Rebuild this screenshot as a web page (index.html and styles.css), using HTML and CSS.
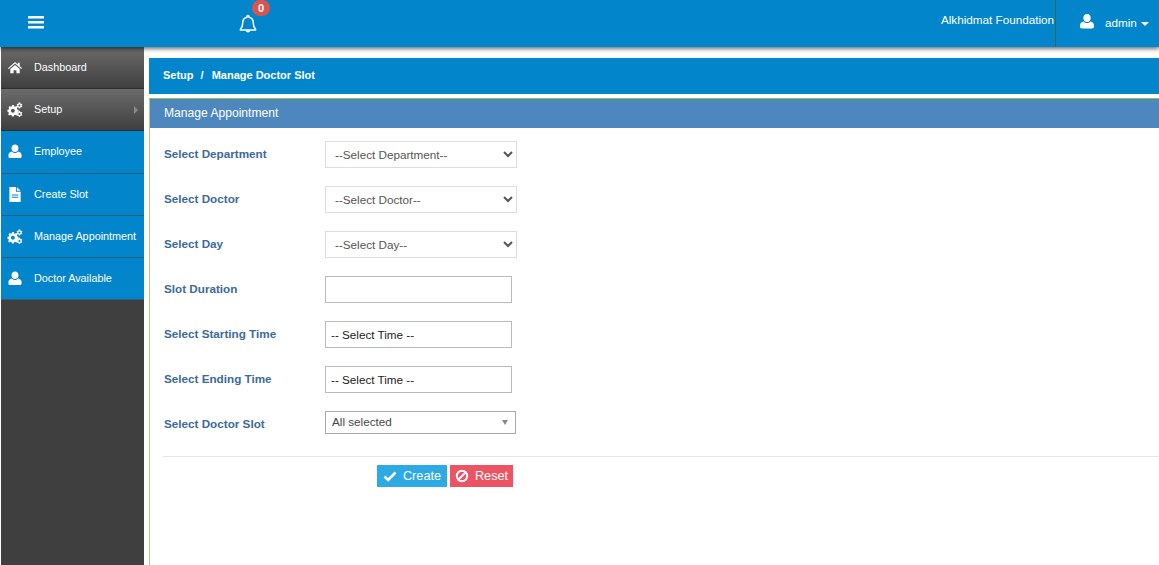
FILE: index.html
```html
<!DOCTYPE html>
<html lang="en">
<head>
<meta charset="utf-8">
<title>Manage Doctor Slot</title>
<link rel="stylesheet" href="styles.css">
</head>
<body>
<svg class="defs" width="0" height="0" aria-hidden="true">
  <symbol id="i-user" viewBox="0 0 16 16"><path d="M8 0.500c2.200 0 3.700 1.700 3.700 3.900S10.200 8.600 8 8.600 4.300 6.600 4.300 4.400 5.800 0.500 8 0.500zM4.600 8c.9 1 2 1.600 3.400 1.600S10.500 9 11.400 8c2 .3 3.600 1.700 3.600 4v1.300c0 1.100-.8 1.700-1.800 1.700H2.800C1.800 15 1 14.400 1 13.300V12c0-2.300 1.600-3.700 3.600-4z"/></symbol>
  <symbol id="i-cogs" viewBox="0 0 18 16"><path fill-rule="evenodd" d="M5.600 3h2l.4 1.500 1.100.5 1.400-.8 1.400 1.400-.8 1.400.5 1.100 1.500.4v2l-1.500.4-.5 1.100.8 1.400-1.400 1.400-1.400-.8-1.100.5-.4 1.500h-2l-.4-1.500-1.100-.5-1.400.8-1.400-1.400.8-1.400-.5-1.100L.5 10.400v-2l1.500-.4.500-1.100-.8-1.400 1.400-1.400 1.400.8 1.100-.5zM6.600 7.200a2.200 2.200 0 1 0 0 4.400 2.200 2.200 0 0 0 0-4.400z"/><path fill-rule="evenodd" d="M14 0l.9.200.1 1 .7.500 1-.3.500.8-.7.800v.9l.7.800-.5.800-1-.3-.7.500-.1 1-.9.200-.9-.2-.1-1-.7-.5-1 .3-.5-.8.700-.8v-.9l-.7-.8.500-.8 1 .3.700-.5.100-1zM14 2.300a1.200 1.200 0 1 0 0 2.400 1.200 1.200 0 0 0 0-2.400z"/><path fill-rule="evenodd" d="M14 9.500l.9.200.1 1 .7.500 1-.3.500.8-.7.800v.9l.7.800-.5.800-1-.3-.7.500-.1 1-.9.200-.9-.2-.1-1-.7-.5-1 .3-.5-.8.700-.8v-.9l-.7-.8.500-.8 1 .3.700-.5.100-1zM14 11.800a1.200 1.200 0 1 0 0 2.400 1.200 1.200 0 0 0 0-2.400z"/></symbol>
</svg>

<header class="topbar">
  <div class="toggle">
    <svg class="burger" viewBox="0 0 16 13" aria-hidden="true"><path d="M0 0h16v2.600H0zM0 5h16v2.600H0zM0 10h16v2.600H0z"/></svg>
  </div>
  <div class="bell">
    <svg class="bell-icon" viewBox="0 0 18 19" aria-hidden="true"><path d="M9 1.600c-.6 0-1 .4-1 1v.6C5.400 3.700 3.800 5.800 3.800 8.300c0 4-.9 5.400-2.400 6.900v.8h15.200v-.8c-1.500-1.500-2.400-2.900-2.400-6.900 0-2.500-1.600-4.600-4.200-5.100v-.6c0-.6-.4-1-1-1z" fill="none" stroke="#fff" stroke-width="1.500" stroke-linejoin="round"/><path d="M6.800 16.600h4.400a2.200 2 0 0 1-4.400 0z" fill="#fff"/></svg>
    <span class="badge">0</span>
  </div>
  <div class="org">Alkhidmat Foundation</div>
  <div class="account">
    <svg class="account-icon"><use href="#i-user"/></svg>
    <span>admin</span>
    <i class="caret"></i>
  </div>
</header>

<div class="shell">
  <nav class="sidebar">
    <a class="nav dark">
      <svg class="ico" viewBox="0 0 16 16" aria-hidden="true"><path d="M8 2l3 2.700V3h2v3.500l2.500 2.300-.8.900L8 3.800 1.300 9.700l-.8-.9zM8 5.200l5 4.400V14H9.500v-3h-3v3H3V9.600z"/></svg>
      <span>Dashboard</span>
    </a>
    <a class="nav dark">
      <svg class="ico"><use href="#i-cogs"/></svg>
      <span>Setup</span>
      <i class="arrow"></i>
    </a>
    <a class="nav">
      <svg class="ico"><use href="#i-user"/></svg>
      <span>Employee</span>
    </a>
    <a class="nav">
      <svg class="ico" viewBox="0 0 16 16" aria-hidden="true"><path fill-rule="evenodd" d="M2 0h7v5h5v11H2zM10 0l4 4h-4zM4.500 8v1h7V8zM4.500 10.500v1h7v-1z"/></svg>
      <span>Create Slot</span>
    </a>
    <a class="nav">
      <svg class="ico"><use href="#i-cogs"/></svg>
      <span>Manage Appointment</span>
    </a>
    <a class="nav">
      <svg class="ico"><use href="#i-user"/></svg>
      <span>Doctor Available</span>
    </a>
  </nav>

  <main class="content">
    <div class="crumb">Setup<span class="sep">/</span>Manage Doctor Slot</div>
    <section class="panel">
      <h2 class="panel-title">Manage Appointment</h2>
      <form class="form">
        <div class="row">
          <label>Select Department</label>
          <select class="pick"><option>--Select Department--</option></select>
        </div>
        <div class="row">
          <label>Select Doctor</label>
          <select class="pick"><option>--Select Doctor--</option></select>
        </div>
        <div class="row">
          <label>Select Day</label>
          <select class="pick"><option>--Select Day--</option></select>
        </div>
        <div class="row">
          <label>Slot Duration</label>
          <input class="field" type="text">
        </div>
        <div class="row">
          <label>Select Starting Time</label>
          <input class="field time" type="text" value="-- Select Time --">
        </div>
        <div class="row">
          <label>Select Ending Time</label>
          <input class="field time" type="text" value="-- Select Time --">
        </div>
        <div class="row">
          <label>Select Doctor Slot</label>
          <div class="multi"><span>All selected</span><i class="multi-caret"></i></div>
        </div>
        <div class="actions">
          <button type="button" class="btn create">
            <svg viewBox="0 0 14 14" aria-hidden="true"><path d="M1.500 7.500l3.700 3.500 7.300-7.500" fill="none" stroke="#fff" stroke-width="2.600"/></svg>
            Create
          </button>
          <button type="button" class="btn reset">
            <svg viewBox="0 0 14 14" aria-hidden="true"><circle cx="7" cy="7" r="5.200" fill="none" stroke="#fff" stroke-width="2"/><path d="M3.500 10.500l7-7" stroke="#fff" stroke-width="2"/></svg>
            Reset
          </button>
        </div>
      </form>
    </section>
  </main>
</div>
</body>
</html>
```
FILE: styles.css
```css
* { box-sizing: border-box; }
html, body { height: 100%; }
body {
  margin: 0;
  height: 565px;
  overflow: hidden;
  background: #fff;
  font-family: "Liberation Sans", Arial, sans-serif;
  font-size: 12px;
  color: #333;
}
.defs { position: absolute; }

.topbar {
  height: 47px;
  background: #0385cb;
  display: flex;
  align-items: flex-start;
  color: #fff;
  box-shadow: 0 2px 4px rgba(0, 0, 0, .55);
  position: relative;
  z-index: 2;
}
.toggle { width: 239px; padding: 16px 0 0 28px; }
.burger { display: block; width: 16px; height: 13px; fill: #fff; }
.bell { position: relative; width: 32px; padding-top: 14px; }
.bell-icon { display: block; width: 18px; height: 19px; }
.badge {
  position: absolute;
  left: 13px;
  top: 0;
  width: 18px;
  height: 16px;
  border-radius: 9px;
  background: #d9534f;
  font-size: 11px;
  font-weight: 700;
  line-height: 16px;
  text-align: center;
}
.org {
  margin-left: auto;
  padding-top: 12px;
  font-size: 11.7px;
  line-height: 15px;
  white-space: nowrap;
}
.account {
  width: 104px;
  height: 47px;
  margin-left: 1px;
  border-left: 1px solid #2f6e3e;
  display: flex;
  align-items: flex-start;
  padding: 13px 0 0 23px;
  font-size: 11.7px;
}
.account-icon { width: 16px; height: 17px; fill: #fff; }
.account span { margin: 2px 0 0 10px; line-height: 15px; }
.caret {
  margin: 9px 0 0 4px;
  border-left: 4px solid transparent;
  border-right: 4px solid transparent;
  border-top: 4px solid #fff;
}

.shell { display: flex; height: 518px; }
.sidebar {
  width: 143px;
  margin-left: 1px;
  background: #3f3f3f;
  flex: none;
}
.nav {
  display: flex;
  height: 42.2px;
  padding: 14px 0 0 6px;
  color: #fff;
  background: #0385cb;
  border-bottom: 1px solid #2b5f80;
  font-size: 10.8px;
  line-height: 13px;
  white-space: nowrap;
  position: relative;
}
.nav.dark {
  background: linear-gradient(#6b6b6b, #3f3f3f);
  border-bottom-color: #2f2f2f;
}
.ico { width: 16px; height: 15px; margin: -1px 11px 0 0; fill: #fff; flex: none; }
.arrow {
  position: absolute;
  right: 6px;
  top: 17px;
  border-top: 4px solid transparent;
  border-bottom: 4px solid transparent;
  border-left: 4px solid #8a8a8a;
}

.content { flex: 1; min-width: 0; margin-left: 5px; padding-top: 11px; }
.crumb {
  height: 36px;
  background: #0385cb;
  color: #fff;
  font-weight: 700;
  font-size: 11px;
  line-height: 35px;
  padding-left: 14px;
}
.sep { margin: 0 8px 0 7px; }
.panel {
  margin-top: 4px;
  border-top: 1px solid #8cc152;
  border-left: 1px solid #a9cf84;
  height: 467px;
}
.panel-title {
  margin: 0;
  height: 29px;
  background: #4e87bd;
  color: #fff;
  font-size: 12.1px;
  font-weight: 400;
  line-height: 29px;
  padding-left: 14px;
}
.form { padding: 13px 0 0 14px; }
.row { display: flex; align-items: flex-start; height: 45px; }
.row label {
  width: 161px;
  font-size: 11.7px;
  font-weight: 700;
  color: #3d6a99;
  line-height: 25px;
}
.pick {
  width: 192px;
  height: 27px;
  padding: 0 5px;
  border: 1px solid #ddd;
  border-radius: 0;
  background: #fff;
  color: #555;
  font-family: inherit;
  font-size: 11.7px;
}
.field {
  width: 187px;
  height: 27px;
  padding: 0 5px;
  border: 1px solid #bbb;
  font-family: inherit;
  font-size: 11.7px;
  color: #222;
  outline: none;
}
.multi {
  width: 191px;
  height: 23px;
  border: 1px solid #aaa;
  padding: 0 6px;
  font-size: 11.7px;
  line-height: 20px;
  color: #444;
  display: flex;
  align-items: center;
  justify-content: space-between;
}
.multi span { margin-top: -2px; }
.multi-caret {
  border-left: 3px solid transparent;
  border-right: 3px solid transparent;
  border-top: 5px solid #888;
  margin-right: 1px;
}
.actions {
  border-top: 1px solid #e5e5e5;
  margin-left: -1px;
  padding: 8px 0 0 214px;
  display: flex;
  gap: 3px;
}
.btn {
  height: 22px;
  border: 0;
  padding: 0;
  color: #fff;
  font-family: inherit;
  font-size: 12.7px;
  display: flex;
  align-items: center;
  justify-content: center;
  gap: 6px;
}
.btn svg { width: 14px; height: 14px; }
.create { width: 70px; background: #2daae4; }
.reset { width: 63px; background: #ec5464; }
```
